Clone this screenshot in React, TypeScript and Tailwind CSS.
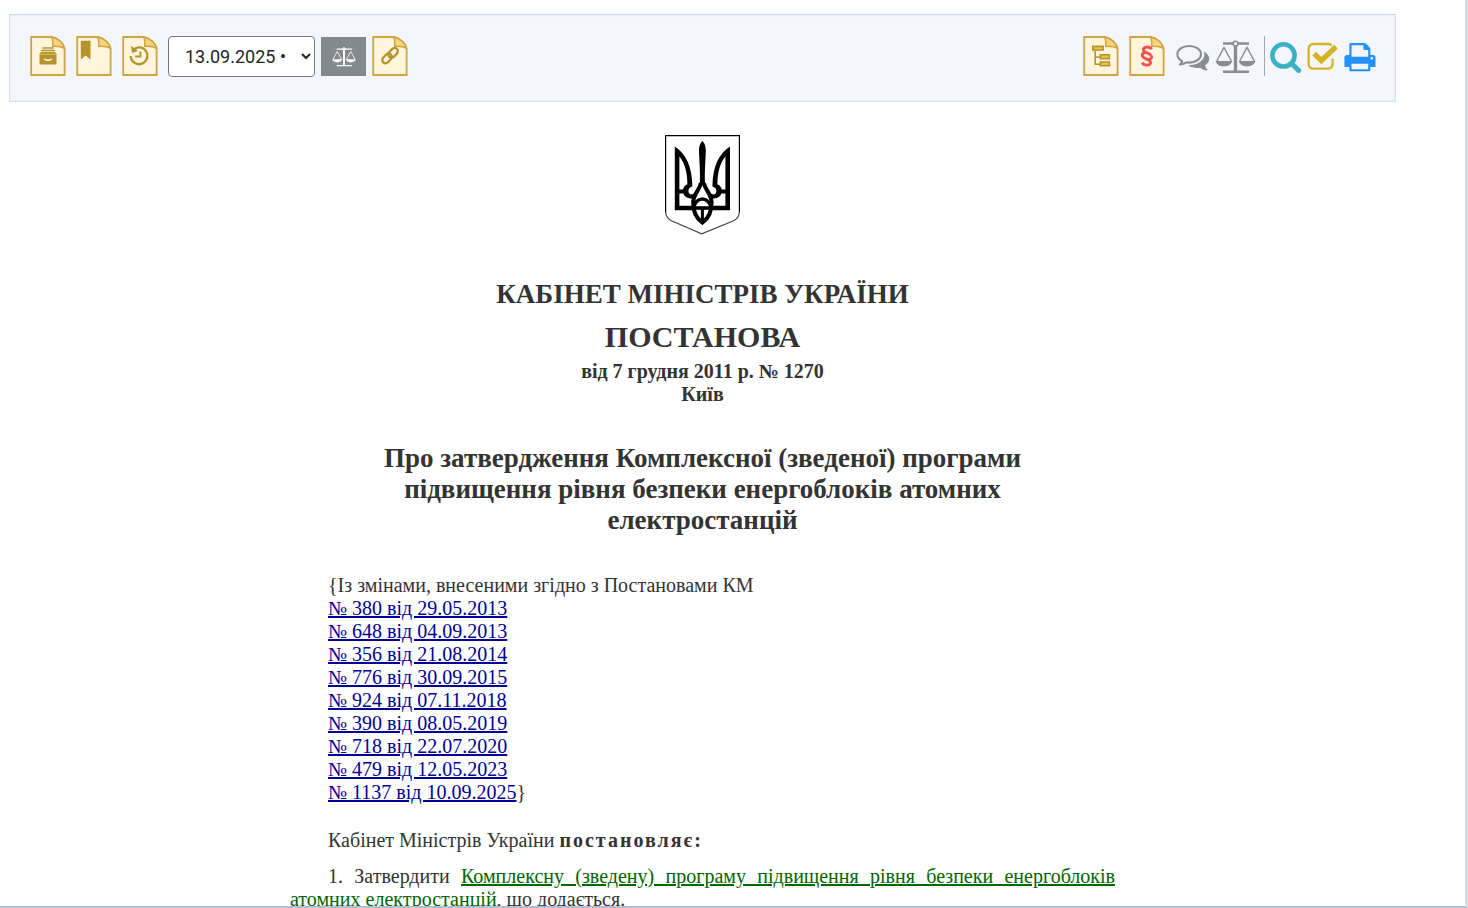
import React from 'react';

interface DocIconProps {
  children?: React.ReactNode;
}

interface ToolLinkProps {
  label: string;
  children: React.ReactNode;
}

const amendments = [
  '№ 380 від 29.05.2013',
  '№ 648 від 04.09.2013',
  '№ 356 від 21.08.2014',
  '№ 776 від 30.09.2015',
  '№ 924 від 07.11.2018',
  '№ 390 від 08.05.2019',
  '№ 718 від 22.07.2020',
  '№ 479 від 12.05.2023',
  '№ 1137 від 10.09.2025',
];

// Paper sheet with a folded corner, used as a base for most toolbar icons
const DocIcon: React.FC<DocIconProps> = ({ children }) => (
  <svg width="36" height="40" viewBox="0 0 36 40" fill="none">
    <path d="M1.2 1H21.5C27 1.6 33.6 7 34.6 12.5V39H1.2Z" fill="#fff5dc" stroke="#cfa446" strokeWidth="1.8" />
    <path d="M22 1.2C28 2 33.6 7.6 34.6 12.6C31.5 10.6 27 10.2 22.8 10.4C23 7 22.8 4 22 1.2Z" fill="#f6d579" stroke="#cfa446" strokeWidth="1.5" strokeLinejoin="round" />
    {children}
  </svg>
);

const ToolLink: React.FC<ToolLinkProps> = ({ label, children }) => (
  <a href="#" aria-label={label} className="block shrink-0">
    {children}
  </a>
);

const ScalesIcon: React.FC<{ className?: string; knob: string }> = ({ className, knob }) => (
  <svg viewBox="0 0 41 34" className={className} fill="none" stroke="currentColor">
    <path d="M8 3.5H34M8 31.8H34" strokeWidth="2.4" />
    <path d="M20.5 4V31" strokeWidth="3.4" />
    <circle cx="20.5" cy="3.6" r="2.4" fill={knob} strokeWidth="1.6" />
    <path d="M1.5 21.5L9 7.5L16.5 21.5M24.5 21.5L32 7.5L39.5 21.5" strokeWidth="1.4" />
    <path d="M0.6 21H17.2C16.4 24.6 13 26.4 9 26.4S1.4 24.6 0.6 21ZM23.8 21H40.4C39.6 24.6 36 26.4 32 26.4S24.6 24.6 23.8 21Z" fill="currentColor" stroke="none" />
  </svg>
);

const Emblem = () => (
  <svg width="75" height="100" viewBox="0 0 75 100" fill="none" stroke="#000" role="img" aria-label="Герб України">
    <path d="M0.6 77V0.6H74.4V77" strokeWidth="1.2" />
    <path d="M0.6 77C0.8 81 3 84 7 86L36.7 98.8L68 86C72 84 74.2 81 74.4 77" stroke="#444" strokeWidth="1.2" />
    <path d="M37.4 6C40 8.4 41 12 40.8 17C40.4 28 39.4 38 40 50H34.8C35.4 38 34.4 28 34 17C33.8 12 34.8 8.4 37.4 6Z" fill="#000" stroke="none" />
    {['', 'translate(74.8 0) scale(-1 1)'].map((mirror) => (
      <g key={mirror} transform={mirror || undefined}>
        <path d="M9.8 11.6C21 19 27 31 27.4 51.4C24.8 52 23.2 53.8 23.4 56.4C23.8 59.4 26.6 60 29 58.4L31 62C25 65.2 19.8 63 18.4 58.6H14.4V70.8H28V75.2H9.8ZM14.4 21.5V54.4H18C18.6 51.8 20.2 50 22.4 49.2C22.2 37 20 28.6 14.4 21.5Z" fill="#000" fillRule="evenodd" stroke="none" />
        <path d="M36 48C34.6 55 28.4 59 28.2 67C28 76 31.6 83.6 37.4 87.6" strokeWidth="4" />
        <path d="M28.4 72C31 63 41 60.6 45.4 70.6" strokeWidth="3" />
      </g>
    ))}
    <path d="M28 73H46.8" strokeWidth="3.6" />
    <path d="M37.4 72V88" strokeWidth="3" />
    <path d="M32.8 84L37.4 90.4L42 84Z" fill="#000" stroke="none" />
  </svg>
);

const Toolbar = () => (
  <header className="flex items-start justify-between border border-[#d2e2f5] border-t-[#c9d7f3] bg-[#f5f6fc] pt-[21px] pr-[19px] pb-6 pl-5 shadow-[inset_0_0_3px_#e4e7f1]">
    <div className="flex items-start gap-[10px]">
      <ToolLink label="Картка документа">
        <DocIcon>
          <path d="M12.5 12H23.5M11 14.5H25" stroke="#b6942d" strokeWidth="1.5" />
          <path d="M10.8 16H25.2L26.5 18.3V27C26.5 28 26 28.4 25 28.4H11C10 28.4 9.5 28 9.5 27V18.3Z" fill="#b6942d" />
          <path d="M10 18.3H26" stroke="#e2cf92" strokeWidth="0.7" />
          <path d="M14.5 22.5C15 24.8 21 24.8 21.5 22.5" stroke="#fff5dc" strokeWidth="1.3" />
        </DocIcon>
      </ToolLink>
      <ToolLink label="Закладка">
        <DocIcon>
          <path d="M4.8 4.8H14.5V23.6L9.7 19.4L4.8 23.6Z" fill="#b6942d" />
        </DocIcon>
      </ToolLink>
      <ToolLink label="Історія">
        <DocIcon>
          <path d="M10.6 14.6C13 11.3 17.6 10.4 21.4 12.5C25.6 15 26.6 20.4 24 24.4C21.3 28.6 15.4 29.6 11.6 26.2C9.6 24.4 8.7 22.3 8.7 20" stroke="#b6942d" strokeWidth="2.3" />
          <path d="M9 9.8L10 17L16 15Z" fill="#b6942d" />
          <path d="M18.4 15.6V20.6H13.2" stroke="#b6942d" strokeWidth="2" />
        </DocIcon>
      </ToolLink>
      <select
        aria-label="Редакція"
        defaultValue="2025"
        className="h-[41px] w-[147px] rounded border border-[#777b80] bg-white pl-3 font-[Roboto,sans-serif] text-[18px] text-[#212529]"
      >
        <option value="2025">13.09.2025 •</option>
        <option value="2023">12.05.2023</option>
        <option value="2020">22.07.2020</option>
      </select>
      <div className="-ml-1 flex items-end gap-[6px]">
        <button aria-label="Порівняти редакції" className="flex h-[39px] w-[45px] items-center justify-center bg-[#838a8f] text-white">
          <ScalesIcon className="h-5 w-6" knob="#fff" />
        </button>
        <ToolLink label="Посилання">
          <DocIcon>
            <g stroke="#b6942d" strokeWidth="2.3" transform="rotate(-47 18 19.5)">
              <rect x="8.4" y="16" width="11" height="6.6" rx="3.3" />
              <rect x="16.6" y="16.6" width="11" height="6.6" rx="3.3" />
            </g>
          </DocIcon>
        </ToolLink>
      </div>
    </div>

    <div className="flex items-center gap-[5px] text-[#868e92]">
      <div className="mr-[6px] flex gap-[10px]">
        <ToolLink label="Структура">
          <DocIcon>
            <g stroke="#b6942d" strokeWidth="1.6">
              <path d="M12.2 15V28.2H17M12.2 21H17" />
              <path d="M9.8 10.4H20.2V14H9.8ZM17.4 18.8H26.4V22.6H17.4ZM17.4 26H26.4V29.8H17.4Z" fill="#e7c64a" />
            </g>
          </DocIcon>
        </ToolLink>
        <ToolLink label="Пошук статті">
          <DocIcon>
            <path d="M22.6 13.2C20.6 10 14.4 10.4 14.2 13.8C14.2 17.2 22.6 17 22.6 21C22.4 24.4 17 24.4 15.2 21.8M20.8 18.4C18.4 15.8 13.2 16 13.2 19.2C13.2 23.2 21.6 22.6 21.6 26.4C21.4 30 14.8 29.8 13.2 26.6" stroke="#fb5050" strokeWidth="2.8" />
          </DocIcon>
        </ToolLink>
      </div>
      <ToolLink label="Коментарі">
        <svg width="34" height="32" viewBox="0 -4 34 32" fill="none">
          <path d="M13.2 2C6.4 2 1.4 5.6 1.4 10.3C1.4 13.2 3.2 15.6 6.2 17.1C5.7 18.6 5 19.6 4 20.5C6.7 20.2 8.9 19.4 10.6 18.3C11.5 18.5 12.4 18.6 13.2 18.6C20 18.6 25 15 25 10.3S20 2 13.2 2Z" stroke="currentColor" strokeWidth="2.1" strokeLinejoin="round" />
          <path d="M27.5 7.3C31 9 33.2 11.7 33.2 14.8C33.2 17.4 31.6 19.8 29 21.4C29.5 23.2 30.4 24.5 31.7 25.8C31 27.5 26.2 25.6 24.2 23.8C19.2 24.6 15 23.4 12.3 21.3C21 21.2 28.5 16.8 28.4 10.3C28.4 9.2 28.1 8.2 27.5 7.3Z" fill="currentColor" />
        </svg>
      </ToolLink>
      <ToolLink label="Порівняння">
        <ScalesIcon className="mt-[2px] h-[34px] w-[41px]" knob="#f5f6fc" />
      </ToolLink>
      <div className="ml-[3px] h-10 w-px bg-[#a5a8ac]" />
      <ToolLink label="Пошук">
        <svg width="32" height="36" viewBox="0 -4 32 36" fill="none" stroke="#3bb1c3">
          <circle cx="13.5" cy="13.4" r="11.1" strokeWidth="4.6" />
          <path d="M22.2 22.2L28.6 28.4" strokeWidth="5" strokeLinecap="round" />
        </svg>
      </ToolLink>
      <ToolLink label="Контроль">
        <svg width="32" height="36" viewBox="0 -4 32 36" fill="none">
          <path d="M24 3C23.4 2.4 22.4 2 21 2H6.5C3.7 2 1.6 4.1 1.6 6.9V21.9C1.6 24.7 3.7 26.6 6.5 26.6H20.8C23.6 26.6 25.6 24.7 25.6 21.9V17.6" stroke="#d3b423" strokeWidth="2.3" strokeLinecap="round" />
          <path d="M7.2 11.8L14.4 18.6L29 4.6" stroke="#d3b423" strokeWidth="5.4" />
        </svg>
      </ToolLink>
      <ToolLink label="Друк">
        <svg width="32" height="34" viewBox="0 -3 32 34" fill="none">
          <path d="M5.3 13V2.8C5.3 1.7 6 1 7 1H20.5C22 1 26.4 5.4 26.4 7V13H29C30.6 13 31.5 14 31.5 15.5V24.2C31.5 24.7 31.2 25 30.7 25H26.4V27.7C26.4 28.7 25.7 29.3 24.7 29.3H7C6 29.3 5.3 28.7 5.3 27.7V25H1.2C0.7 25 0.4 24.7 0.4 24.2V15.5C0.4 14 1.4 13 3 13Z" fill="#2491ff" />
          <path d="M7.5 3.2H19.4V6.5C19.4 7.4 20 8 20.8 8H24.2V14.7H7.5ZM7.5 21.8H24.2V27.2H7.5Z" fill="#f5f6fc" />
          <circle cx="27.8" cy="16.3" r="1.2" fill="#f5f6fc" />
        </svg>
      </ToolLink>
    </div>
  </header>
);

const App = () => {
  return (
    <div className="h-screen overflow-hidden border-r-[3px] border-b-2 border-r-[#d8dde1] border-b-[#b4bdd3] bg-white pt-[14px] pr-[69px] pl-[9px] font-['Liberation_Serif','Times_New_Roman',serif] text-[20px] leading-[23px] text-[#333]">
      <Toolbar />

      <main className="mx-auto max-w-[825px] pt-[33px]">
        <div className="text-center font-bold">
          <div className="flex justify-center">
            <Emblem />
          </div>
          <p className="mt-11 text-[27px] leading-[31px]">КАБІНЕТ МІНІСТРІВ УКРАЇНИ</p>
          <p className="mt-[9px] text-[30px] leading-9">ПОСТАНОВА</p>
          <p className="mt-[5px]">
            від 7 грудня 2011 р. № 1270
            <br />
            Київ
          </p>
          <h1 className="mt-[37px] px-10 text-[27px] leading-[31px]">
            Про затвердження Комплексної (зведеної) програми підвищення рівня безпеки енергоблоків атомних електростанцій
          </h1>
        </div>

        <div className="mt-[38px] pl-[38px]">
          <p>{'{Із змінами, внесеними згідно з Постановами КМ'}</p>
          {amendments.map((item, index) => (
            <p key={item}>
              <a href="#" className="text-[#000099] underline decoration-2">{item}</a>
              {index === amendments.length - 1 && '}'}
            </p>
          ))}
        </div>

        <p className="mt-[25px] pl-[38px]">
          Кабінет Міністрів України <b className="tracking-[2px]">постановляє:</b>
        </p>
        <p className="mt-[13px] text-justify indent-[38px]">
          1. Затвердити{' '}
          <a href="#" className="text-[#006600] underline decoration-2">
            Комплексну (зведену) програму підвищення рівня безпеки енергоблоків атомних електростанцій
          </a>
          , що додається.
        </p>
      </main>
    </div>
  );
};

export default App;
